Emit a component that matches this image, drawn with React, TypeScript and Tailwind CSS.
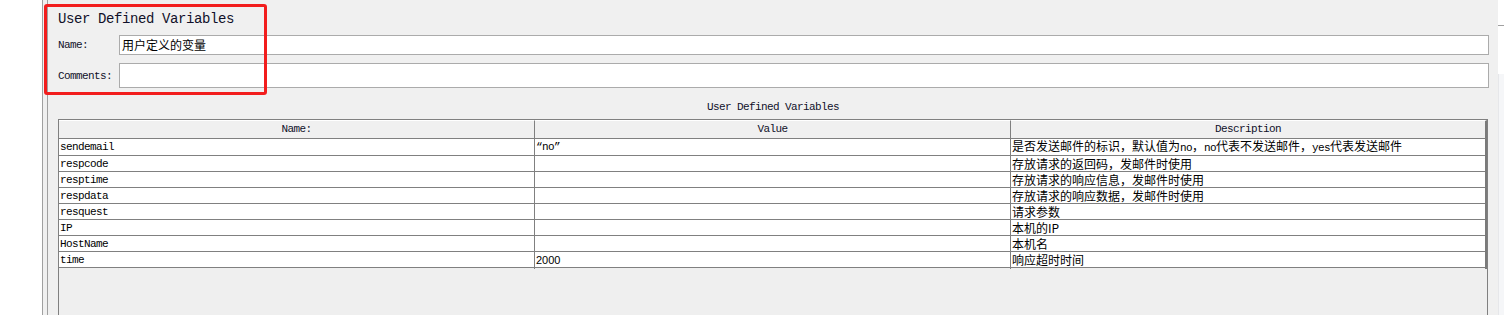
const mono = "font-['Liberation_Mono',monospace] text-[11px] tracking-[-0.6px]";
const cjk = "font-['Noto_Sans_CJK_SC',sans-serif] text-[12px]";

const rows: { name: string; value: string; desc: React.ReactNode }[] = [
  {
    name: "sendemail",
    value: "“no”",
    desc: (
      <>
        是否发送邮件的标识，默认值为<span className={mono}>no</span>，
        <span className={mono}>no</span>代表不发送邮件，
        <span className={mono}>yes</span>代表发送邮件
      </>
    ),
  },
  { name: "respcode", value: "", desc: "存放请求的返回码，发邮件时使用" },
  { name: "resptime", value: "", desc: "存放请求的响应信息，发邮件时使用" },
  { name: "respdata", value: "", desc: "存放请求的响应数据，发邮件时使用" },
  { name: "resquest", value: "", desc: "请求参数" },
  { name: "IP", value: "", desc: "本机的IP" },
  { name: "HostName", value: "", desc: "本机名" },
  { name: "time", value: "2000", desc: "响应超时时间" },
];

function HeaderCell({ label, last }: { label: string; last?: boolean }) {
  return (
    <div
      className={`flex h-[19px] items-center justify-center border-t border-b border-t-white border-b-[#808080] bg-[#f0f0f0] text-[#10102a] ${mono} ${
        last ? "border-r-2 border-r-[#7a7a7a]" : "border-r border-r-[#808080]"
      }`}
    >
      {label}
    </div>
  );
}

export default function App() {
  return (
    <div className="relative flex h-[315px] w-[1504px] overflow-hidden bg-white">
      <div className="w-[42px] shrink-0 bg-white" />
      <div className="w-px shrink-0 bg-[#a0a0a0]" />
      <div className="w-[4px] shrink-0 bg-[#f0f0f0]" />
      <div className="w-px shrink-0 bg-[#a0a0a0]" />

      <div className="flex w-[1450px] shrink-0 flex-col bg-[#f0f0f0]">
        <div className="ml-[10px] mt-[11px] h-[15px] font-['Liberation_Mono',monospace] text-[14px] leading-[16px] tracking-[-0.4px] text-[#10102a]">
          User Defined Variables
        </div>

        <div className="mt-[9px] flex h-[20px] items-center pl-[10px] pr-[9px]">
          <span className={`w-[61px] pt-px text-[#10102a] ${mono}`}>Name:</span>
          <div className="flex h-full flex-1 items-center border border-[#ababab] bg-white pl-[2px]">
            <span className={`${cjk} text-black`}>用户定义的变量</span>
          </div>
        </div>

        <div className="mt-[8px] flex h-[25px] items-center pl-[10px] pr-[9px]">
          <span className={`w-[61px] pt-px text-[#10102a] ${mono}`}>Comments:</span>
          <div className="h-full flex-1 border border-[#ababab] bg-white" />
        </div>

        <div className={`mt-[13px] h-[12px] text-center leading-[12px] text-[#10102a] ${mono}`}>
          User Defined Variables
        </div>

        <div className="mx-[10px] mt-[6px] flex flex-1 flex-col border-x border-t border-[#808080] bg-[#efefef]">
          <div className="grid grid-cols-3">
            <HeaderCell label="Name:" />
            <HeaderCell label="Value" />
            <HeaderCell label="Description" last />
          </div>
          {rows.map((r, i) => (
            <div
              key={r.name}
              className={`grid grid-cols-3 border-b border-[#808080] bg-white ${
                i === 0 ? "h-[17px]" : "h-[16px]"
              }`}
            >
              <div className={`flex items-center border-r border-[#808080] pl-[1px] text-black ${mono}`}>
                {r.name}
              </div>
              <div
                className={`flex items-center border-r border-[#808080] pl-[1px] text-black ${
                  r.value === "2000"
                    ? "font-['Liberation_Sans',sans-serif] text-[11px]"
                    : mono
                }`}
              >
                {r.value}
              </div>
              <div className={`flex items-center whitespace-pre-wrap border-r-2 border-[#7a7a7a] pb-px pl-[1px] leading-[14px] text-black ${cjk}`}>
                <span>{r.desc}</span>
              </div>
            </div>
          ))}
        </div>
      </div>

      <div className="flex w-[6px] shrink-0 flex-col bg-white">
        <div className="h-[25px]" />
        <div className="h-px bg-[#a0a0a0]" />
        <div className="h-[48px]" />
        <div className="flex-1 border-l border-[#e6e7ea] bg-[#f5f6f8]" />
      </div>

      <div className="pointer-events-none absolute left-[44px] top-[4px] h-[91px] w-[223px] rounded-[3px] border-[3px] border-[#f21d1d]" />
    </div>
  );
}
